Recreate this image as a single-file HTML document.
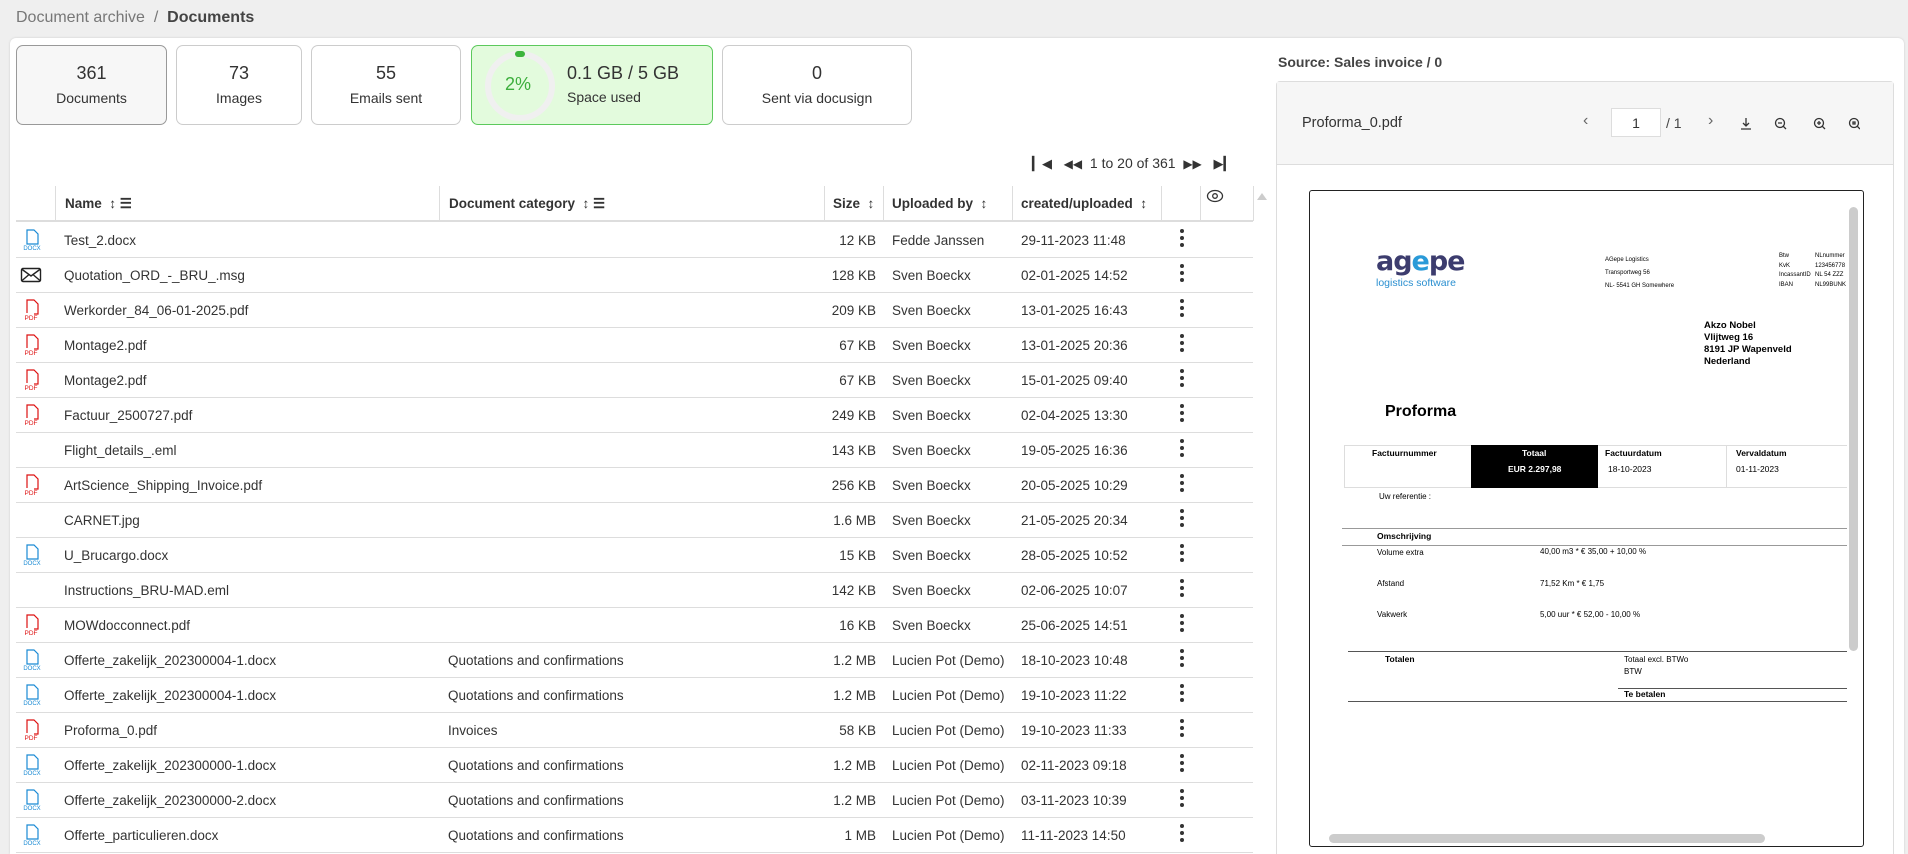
<!DOCTYPE html>
<html><head><meta charset="utf-8"><style>
*{box-sizing:border-box;margin:0;padding:0}
html{width:1908px;height:854px;overflow:hidden}
body{width:1908px;height:854px;overflow:hidden;background:#efefef;font-family:"Liberation Sans",Arial,sans-serif;color:#333;position:relative;font-size:14px}
.abs{position:absolute}
.bc{left:16px;top:9px;font-size:16px;color:#777}
.bc b{color:#444}
.main{left:10px;top:38px;width:1894px;height:816px;background:#fff;border-radius:6px 6px 0 0;box-shadow:0 0 2px #ccc}
.card{position:absolute;top:45px;height:80px;border:1px solid #ccc;border-radius:7px;background:#fff;text-align:center;color:#333}
.card .n{font-size:18px;margin-top:17px}
.card .l{font-size:14px;margin-top:6px}
.row{position:absolute;left:16px;width:1237px;height:35px;border-bottom:1px solid #ddd;font-size:13.5px;color:#333}
.row span{position:absolute;top:10px;white-space:nowrap}
.hd span{position:absolute;top:10px;font-weight:bold;font-size:13.5px;color:#333}
.vs{position:absolute;top:186px;width:1px;height:35px;background:#ddd}
.dots{position:absolute;left:1161px;width:16px;top:6px}
.dots i{display:block;width:4px;height:4px;border-radius:2px;background:#333;margin:0 0 3px 0}
.p{position:absolute;color:#000;white-space:nowrap}
</style></head><body>
<div class="abs bc">Document archive &nbsp;/&nbsp; <b>Documents</b></div>
<div class="abs main"></div>

<div class="card" style="left:16px;width:151px;background:#f7f7f7;border-color:#999"><div class="n">361</div><div class="l">Documents</div></div>
<div class="card" style="left:176px;width:126px"><div class="n">73</div><div class="l">Images</div></div>
<div class="card" style="left:311px;width:150px"><div class="n">55</div><div class="l">Emails sent</div></div>
<div class="card" style="left:471px;width:242px;background:#e3fbdd;border-color:#5cc95c;text-align:left">
 <svg class="abs" style="left:12px;top:4px" width="72" height="72"><circle cx="36" cy="36" r="32" fill="none" stroke="#f0f0f0" stroke-width="6"/><path d="M34 4 L38 4" stroke="#3cb43c" stroke-width="6" stroke-linecap="round"/></svg>
 <div class="abs" style="left:33px;top:28px;color:#3cae3c;font-size:18px">2%</div>
 <div class="abs" style="left:95px;top:17px;font-size:18px">0.1 GB / 5 GB</div>
 <div class="abs" style="left:95px;top:43px;font-size:14px">Space used</div>
</div>
<div class="card" style="left:722px;width:190px"><div class="n">0</div><div class="l">Sent via docusign</div></div>

<div class="abs" style="left:1032px;top:155px;font-size:14px;color:#333">
<span style="font-size:13px">&#9614;&#9664;</span>&nbsp;&nbsp;&nbsp;<span style="font-size:12px">&#9664;&#9664;</span>&nbsp; 1 to 20 of 361 &nbsp;<span style="font-size:12px">&#9654;&#9654;</span>&nbsp;&nbsp;&nbsp;<span style="font-size:13px">&#9654;&#9614;</span></div>

<div class="row hd" style="top:186px;height:36px;border-bottom:2px solid #ddd">
<span style="left:49px">Name &nbsp;↕ ☰</span>
<span style="left:433px">Document category &nbsp;↕ ☰</span>
<span style="left:817px">Size &nbsp;↕</span>
<span style="left:876px">Uploaded by &nbsp;↕</span>
<span style="left:1005px">created/uploaded &nbsp;↕</span>
<svg class="abs" style="left:1190px;top:3px" width="18" height="14"><ellipse cx="9" cy="7" rx="7.5" ry="5.5" fill="none" stroke="#333" stroke-width="1.3"/><circle cx="9" cy="7" r="2.3" fill="none" stroke="#333" stroke-width="1.3"/></svg>
</div>
<div class="vs" style="left:55px"></div><div class="vs" style="left:439px"></div><div class="vs" style="left:824px"></div><div class="vs" style="left:883px"></div><div class="vs" style="left:1012px"></div><div class="vs" style="left:1161px"></div><div class="vs" style="left:1200px"></div><div class="vs" style="left:1253px"></div>
<div class="abs" style="left:1257px;top:193px;width:0;height:0;border-left:5px solid transparent;border-right:5px solid transparent;border-bottom:7px solid #ccc"></div>

<div id="rows"></div>

<div class="abs" style="left:1278px;top:54px;font-size:14px;font-weight:bold;color:#444">Source: Sales invoice / 0</div>
<div class="abs" style="left:1276px;top:81px;width:618px;height:780px;border:1px solid #ddd;border-radius:4px"></div>
<div class="abs" style="left:1277px;top:82px;width:616px;height:83px;background:#f6f6f6;border-bottom:1px solid #ddd"></div>
<div class="abs" style="left:1302px;top:115px;font-size:14.5px;color:#333">Proforma_0.pdf</div>
<div class="abs" style="left:1583px;top:112px;font-size:16px;color:#666">&lsaquo;</div>
<div class="abs" style="left:1611px;top:108px;width:50px;height:29px;background:#fff;border:1px solid #ddd;text-align:center;padding-top:6px;font-size:14px;color:#333">1</div>
<div class="abs" style="left:1666px;top:115px;font-size:14px;color:#444">/ 1</div>
<div class="abs" style="left:1708px;top:112px;font-size:16px;color:#666">&rsaquo;</div>
<svg class="abs" style="left:1740px;top:116px" width="120" height="16" fill="none" stroke="#333" stroke-width="1.3">
<path d="M6 2v8M3 7l3 3 3-3M1 13h10"/>
<circle cx="40" cy="7" r="4.5"/><path d="M38 7h4M43 10l3 3"/>
<circle cx="79" cy="7" r="4.5"/><path d="M77 7h4M79 5v4M82 10l3 3"/>
<circle cx="114" cy="7" r="4.5"/><path d="M113 6h2v2h-2zM117 10l3 3"/>
</svg>

<div class="abs" style="left:1309px;top:190px;width:555px;height:657px;border:1px solid #222;border-radius:3px;background:#fff"></div>
<div class="abs" style="left:1849px;top:207px;width:9px;height:444px;background:#ccc;border-radius:5px"></div>
<div class="abs" style="left:1329px;top:834px;width:436px;height:9px;background:#ccc;border-radius:5px"></div>

<div class="p" style="left:1376px;top:250px;font-size:27px;font-weight:bold;color:#3c3c6e;letter-spacing:-1px;font-family:'DejaVu Sans',sans-serif;line-height:24px">ag<span style="color:#2a9ad8">e</span>pe</div>
<div class="p" style="left:1376px;top:277px;font-size:10.5px;color:#2a8fd0">logistics software</div>
<div class="p" style="left:1605px;top:254px;font-size:6px;line-height:13px">AGepe Logistics<br>Transportweg 56<br>NL- 5541 GH Somewhere</div>
<div class="p" style="left:1779px;top:252px;font-size:6px;line-height:9.5px">Btw<br>KvK<br>IncassantID<br>IBAN</div>
<div class="p" style="left:1815px;top:252px;font-size:6px;line-height:9.5px;overflow:hidden;width:32px">NLnummer<br>123456778<br>NL 54 ZZZ<br>NL99BUNK</div>
<div class="p" style="left:1704px;top:320px;font-size:9.5px;font-weight:bold;line-height:12px">Akzo Nobel<br>Vlijtweg 16<br>8191 JP Wapenveld<br>Nederland</div>
<div class="p" style="left:1385px;top:403px;font-size:16px;font-weight:bold">Proforma</div>
<div class="abs" style="left:1344px;top:445px;width:503px;height:43px;border:1px solid #ddd;border-right:none"></div>
<div class="abs" style="left:1471px;top:445px;width:127px;height:43px;background:#000"></div>
<div class="abs" style="left:1726px;top:445px;width:1px;height:43px;background:#ddd"></div>
<div class="p" style="left:1372px;top:448px;font-size:8.5px;font-weight:bold">Factuurnummer</div>
<div class="p" style="left:1522px;top:448px;font-size:8.5px;font-weight:bold;color:#fff">Totaal</div>
<div class="p" style="left:1508px;top:464px;font-size:8.5px;font-weight:bold;color:#fff">EUR 2.297,98</div>
<div class="p" style="left:1605px;top:448px;font-size:8.5px;font-weight:bold">Factuurdatum</div>
<div class="p" style="left:1608px;top:464px;font-size:8.5px">18-10-2023</div>
<div class="p" style="left:1736px;top:448px;font-size:8.5px;font-weight:bold">Vervaldatum</div>
<div class="p" style="left:1736px;top:464px;font-size:8.5px">01-11-2023</div>
<div class="p" style="left:1379px;top:492px;font-size:8px">Uw referentie :</div>
<div class="abs" style="left:1342px;top:528px;width:505px;height:1px;background:#999"></div>
<div class="p" style="left:1377px;top:531px;font-size:8.5px;font-weight:bold">Omschrijving</div>
<div class="abs" style="left:1342px;top:545px;width:505px;height:1px;background:#999"></div>
<div class="p" style="left:1377px;top:548px;font-size:8px">Volume extra</div>
<div class="p" style="left:1540px;top:547px;font-size:8px">40,00 m3 * € 35,00 + 10,00 %</div>
<div class="p" style="left:1377px;top:579px;font-size:8px">Afstand</div>
<div class="p" style="left:1540px;top:579px;font-size:8px">71,52 Km * € 1,75</div>
<div class="p" style="left:1377px;top:610px;font-size:8px">Vakwerk</div>
<div class="p" style="left:1540px;top:610px;font-size:8px">5,00 uur * € 52,00 - 10,00 %</div>
<div class="abs" style="left:1348px;top:651px;width:499px;height:1px;background:#555"></div>
<div class="p" style="left:1385px;top:654px;font-size:8.5px;font-weight:bold">Totalen</div>
<div class="p" style="left:1624px;top:654px;font-size:8px;line-height:12px">Totaal excl. BTWo<br>BTW</div>
<div class="abs" style="left:1618px;top:688px;width:229px;height:1px;background:#555"></div>
<div class="p" style="left:1624px;top:689px;font-size:8.5px;font-weight:bold">Te betalen</div>
<div class="abs" style="left:1348px;top:701px;width:499px;height:1px;background:#555"></div>

<script>
const D='<svg width="18" height="22" viewBox="0 0 18 22"><path d="M4 1h7l4 4v10H4z" fill="none" stroke="#1a8ad4" stroke-width="1.2"/><text x="9" y="21" font-size="6" fill="#1a8ad4" text-anchor="middle" font-family="Liberation Sans">DOCX</text></svg>';
const P='<svg width="18" height="22" viewBox="0 0 18 22"><path d="M11 15h4V5l-4-4H4v13" fill="none" stroke="#d11" stroke-width="1.2"/><text x="8" y="21" font-size="6.5" fill="#d11" text-anchor="middle" font-family="Liberation Sans">PDF</text></svg>';
const M='<svg width="22" height="18" viewBox="0 0 22 18"><rect x="1.5" y="2.5" width="19" height="13" rx="1.5" fill="none" stroke="#222" stroke-width="1.4"/><path d="M1.5 3l9.5 7 9.5-7M1.5 15l7-6M20.5 15l-7-6" fill="none" stroke="#222" stroke-width="1.4"/></svg>';
const r=[[D,'Test_2.docx','','12 KB','Fedde Janssen','29-11-2023 11:48'],
[M,'Quotation_ORD_-_BRU_.msg','','128 KB','Sven Boeckx','02-01-2025 14:52'],
[P,'Werkorder_84_06-01-2025.pdf','','209 KB','Sven Boeckx','13-01-2025 16:43'],
[P,'Montage2.pdf','','67 KB','Sven Boeckx','13-01-2025 20:36'],
[P,'Montage2.pdf','','67 KB','Sven Boeckx','15-01-2025 09:40'],
[P,'Factuur_2500727.pdf','','249 KB','Sven Boeckx','02-04-2025 13:30'],
['','Flight_details_.eml','','143 KB','Sven Boeckx','19-05-2025 16:36'],
[P,'ArtScience_Shipping_Invoice.pdf','','256 KB','Sven Boeckx','20-05-2025 10:29'],
['','CARNET.jpg','','1.6 MB','Sven Boeckx','21-05-2025 20:34'],
[D,'U_Brucargo.docx','','15 KB','Sven Boeckx','28-05-2025 10:52'],
['','Instructions_BRU-MAD.eml','','142 KB','Sven Boeckx','02-06-2025 10:07'],
[P,'MOWdocconnect.pdf','','16 KB','Sven Boeckx','25-06-2025 14:51'],
[D,'Offerte_zakelijk_202300004-1.docx','Quotations and confirmations','1.2 MB','Lucien Pot (Demo)','18-10-2023 10:48'],
[D,'Offerte_zakelijk_202300004-1.docx','Quotations and confirmations','1.2 MB','Lucien Pot (Demo)','19-10-2023 11:22'],
[P,'Proforma_0.pdf','Invoices','58 KB','Lucien Pot (Demo)','19-10-2023 11:33'],
[D,'Offerte_zakelijk_202300000-1.docx','Quotations and confirmations','1.2 MB','Lucien Pot (Demo)','02-11-2023 09:18'],
[D,'Offerte_zakelijk_202300000-2.docx','Quotations and confirmations','1.2 MB','Lucien Pot (Demo)','03-11-2023 10:39'],
[D,'Offerte_particulieren.docx','Quotations and confirmations','1 MB','Lucien Pot (Demo)','11-11-2023 14:50']];
let h='';r.forEach((x,i)=>{h+=`<div class="row" style="top:${223+i*35}px"><div class="abs" style="left:${x[0]==M?4:7}px;top:${x[0]==M?8:6}px">${x[0]}</div><span style="left:48px">${x[1]}</span><span style="left:432px">${x[2]}</span><span style="right:${1237-860}px">${x[3]}</span><span style="left:876px">${x[4]}</span><span style="left:1005px">${x[5]}</span><div class="dots" style="left:1164px"><i></i><i></i><i></i></div></div>`});
document.getElementById('rows').innerHTML=h;
</script>
</body></html>
